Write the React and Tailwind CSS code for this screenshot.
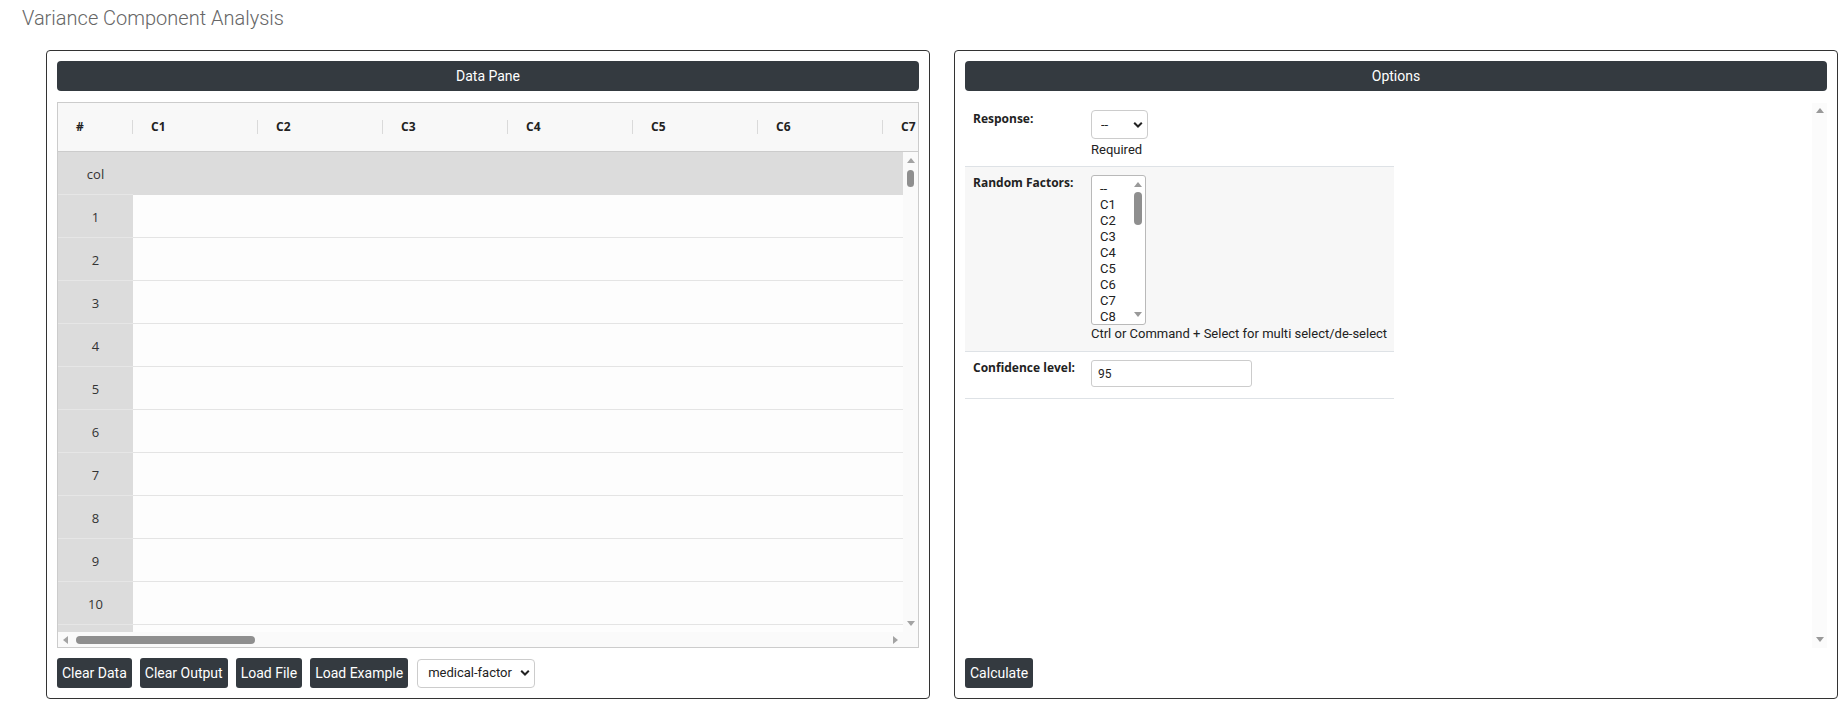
import React from 'react';

const columns = ['C1', 'C2', 'C3', 'C4', 'C5', 'C6', 'C7'];
const rowNumbers = [1, 2, 3, 4, 5, 6, 7, 8, 9, 10, ''];
const factorOptions = ['--', 'C1', 'C2', 'C3', 'C4', 'C5', 'C6', 'C7', 'C8'];

// small scrollbar arrow triangles
const Arrow = ({ dir, color = '#a3a3a3' }) => {
    const vertical = dir === 'up' || dir === 'down';
    const w = vertical ? 8 : 5;
    const h = vertical ? 5 : 8;
    const points = {
        up: '0,5 4,0 8,5',
        down: '0,0 8,0 4,5',
        left: '5,0 5,8 0,4',
        right: '0,0 0,8 5,4',
    }[dir];
    return (
        <svg width={w} height={h} viewBox={`0 0 ${w} ${h}`} className="shrink-0">
            <polygon points={points} fill={color} />
        </svg>
    );
};

const Chevron = () => (
    <svg width="10" height="7" viewBox="0 0 10 7" className="absolute right-[5px] top-1/2 -translate-y-1/2 pointer-events-none">
        <path d="M1.2 1.3 L5 5 L8.8 1.3" fill="none" stroke="#222" strokeWidth="2" />
    </svg>
);

const Panel = ({ title, children }) => (
    <div className="w-[884px] h-[649px] shrink-0 border border-[#333] rounded-[4px] p-[10px] flex flex-col">
        <div className="h-[30px] shrink-0 rounded-[4px] bg-[#343a40] text-white text-[14px] flex items-center justify-center">
            {title}
        </div>
        {children}
    </div>
);

const DarkButton = ({ children }) => (
    <button className="h-[30px] px-[5px] rounded-[3px] bg-[#343a40] text-white text-[14px] leading-none">
        {children}
    </button>
);

const DataGrid = () => (
    <div className="mt-[11px] h-[546px] shrink-0 border border-[#ccc] flex flex-col font-['Open_Sans',sans-serif] text-[#222]">
        {/* column headers */}
        <div className="h-[49px] shrink-0 border-b border-[#ccc] bg-[#f8f8f8] flex overflow-hidden">
            <div className="w-[74px] shrink-0 flex items-center pl-[18px] text-[12px] font-bold">#</div>
            {columns.map((c) => (
                <div key={c} className="w-[125px] shrink-0 flex items-center">
                    <span className="h-[14px] w-px bg-[#dadada]" />
                    <span className="pl-[18px] text-[12px] font-bold">{c}</span>
                </div>
            ))}
        </div>

        <div className="h-[480px] shrink-0 flex">
            <div className="flex-1 overflow-hidden">
                <div className="flex h-[43px] bg-[#dcdcdc]">
                    <div className="w-[75px] shrink-0 border-b border-[#e6e6e6] pt-[3px] flex items-center justify-center text-[13px] text-[#333]">col</div>
                </div>
                {rowNumbers.map((n, i) => (
                    <div key={i} className="flex h-[43px]">
                        <div className="w-[75px] shrink-0 bg-[#dcdcdc] border-b border-[#e6e6e6] pt-[3px] flex items-center justify-center text-[13px] text-[#333]">
                            {n}
                        </div>
                        <div className="flex-1 bg-[#fdfdfd] border-b border-[#e4e4e4]" />
                    </div>
                ))}
            </div>
            {/* vertical scrollbar */}
            <div className="w-[15px] shrink-0 bg-[#fafafa] flex flex-col items-center pt-[6px] pb-[6px]">
                <Arrow dir="up" />
                <div className="mt-[7px] h-[17px] w-[7px] rounded-full bg-[#8f8f8f]" />
                <div className="flex-1" />
                <Arrow dir="down" />
            </div>
        </div>

        {/* horizontal scrollbar */}
        <div className="h-[15px] shrink-0 flex">
            <div className="flex-1 bg-[#fafafa] flex items-center pl-[5px] pr-[5px]">
                <Arrow dir="left" />
                <div className="ml-[8px] h-[8px] w-[179px] rounded-full bg-[#8f8f8f]" />
                <div className="flex-1" />
                <Arrow dir="right" />
            </div>
            <div className="w-[15px] bg-[#fafafa]" />
        </div>
    </div>
);

const OptionRow = ({ label, striped, valueClass, children }) => (
    <div className={`flex border-b border-[#dee2e6] ${striped ? 'bg-[#f7f7f7]' : ''}`}>
        <div className="w-[126px] shrink-0 pl-[8px] pt-[8px] font-['Open_Sans',sans-serif] font-bold text-[12px] leading-[16px] text-[#222]">
            {label}
        </div>
        <div className={valueClass}>{children}</div>
    </div>
);

const FactorList = () => (
    <div className="w-[55px] h-[150px] border border-[#b9b9b9] rounded-[3px] bg-white flex overflow-hidden">
        <div className="flex-1 pl-[8px] pt-[5px] text-[13px] leading-[16px] text-[#222]">
            {factorOptions.map((f) => (
                <div key={f}>{f}</div>
            ))}
        </div>
        <div className="w-[15px] shrink-0 flex flex-col items-center pt-[6px] pb-[7px]">
            <Arrow dir="up" color="#999" />
            <div className="mt-[5px] h-[33px] w-[8px] rounded-full bg-[#8f8f8f]" />
            <div className="flex-1" />
            <Arrow dir="down" color="#999" />
        </div>
    </div>
);

const OptionsBody = () => (
    <div className="mt-[12px] flex-1 min-h-0 flex">
        <div className="flex-1">
            <div className="w-[429px] text-[13px] text-[#222]">
                <OptionRow label="Response:" valueClass="pt-[7px] pb-[8px]">
                    <div className="relative w-[57px]">
                        <select className="appearance-none w-[57px] h-[29px] border border-[#ccc] rounded-[4px] bg-white pl-[9px] text-[13px] text-[#222]">
                            <option>--</option>
                        </select>
                        <Chevron />
                    </div>
                    <div className="mt-[3px] leading-[16px]">Required</div>
                </OptionRow>

                <OptionRow label="Random Factors:" striped valueClass="pt-[8px] pb-[9px]">
                    <FactorList />
                    <div className="mt-[1px] leading-[16px]">Ctrl or Command + Select for multi select/de-select</div>
                </OptionRow>

                <OptionRow label="Confidence level:" valueClass="pt-[8px] pb-[11px]">
                    <input
                        defaultValue="95"
                        className="w-[161px] h-[27px] border border-[#ccc] rounded-[3px] bg-white px-[6px] text-[12px] text-[#222] outline-none"
                    />
                </OptionRow>
            </div>
        </div>
        {/* options scrollbar */}
        <div className="w-[15px] shrink-0 bg-[#fbfbfb] flex flex-col items-center justify-between pt-[5px] pb-[6px]">
            <Arrow dir="up" color="#999" />
            <Arrow dir="down" color="#999" />
        </div>
    </div>
);

export default function App() {
    return (
        <div className="min-h-screen bg-white font-['Roboto',sans-serif] text-[#222]">
            <h1 className="pl-[22px] pt-[6px] text-[20px] leading-[24px] font-light text-[#666]">
                Variance Component Analysis
            </h1>

            <div className="mt-[20px] flex gap-[24px] pl-[46px] pr-[10px]">
                <Panel title="Data Pane">
                    <DataGrid />
                    <div className="mt-[10px] flex items-center gap-[8px]">
                        <DarkButton>Clear Data</DarkButton>
                        <DarkButton>Clear Output</DarkButton>
                        <DarkButton>Load File</DarkButton>
                        <DarkButton>Load Example</DarkButton>
                        <div className="relative ml-[1px] w-[118px]">
                            <select className="appearance-none w-[118px] h-[29px] border border-[#ccc] rounded-[4px] bg-white pl-[10px] text-[13px] text-[#222]">
                                <option>medical-factor</option>
                            </select>
                            <Chevron />
                        </div>
                    </div>
                </Panel>

                <Panel title="Options">
                    <OptionsBody />
                    <div className="mt-[10px] flex">
                        <DarkButton>Calculate</DarkButton>
                    </div>
                </Panel>
            </div>
        </div>
    );
}
